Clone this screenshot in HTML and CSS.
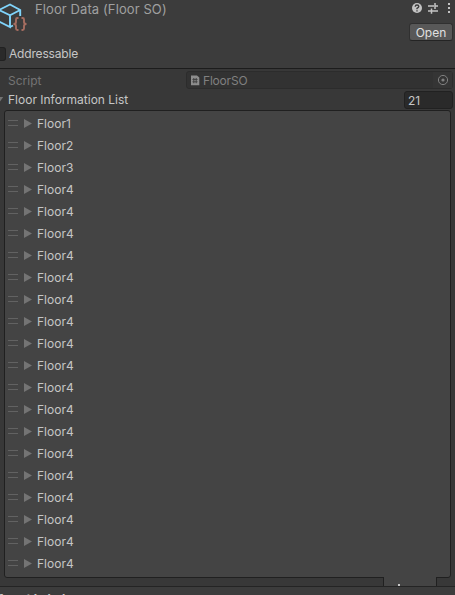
FILE: index.html
```
<!DOCTYPE html>
<html lang="en">
<head>
<meta charset="utf-8">
<title>Floor Data</title>
<link rel="stylesheet" href="styles.css">
</head>
<body>
<header class="header">
  <div class="title-row">
    <svg class="asset-icon" width="28" height="34" viewBox="0 0 28 34" fill="none">
      <path d="M-1 10 L10 4.5 L20.2 10 V16 M20.2 10 L10 15.3 L-1 10 V21.5 L10 27 V15.3 M10 27 L13 25.5" stroke="#80d4fb" stroke-width="1.9"/>
      <path d="M18.5 18 H17.5 Q16 18 16 19.5 V22 Q16 24 13.5 24 Q16 24 16 26 V28.5 Q16 30 17.5 30 H18.5 M21.5 18 H22.5 Q24 18 24 19.5 V22 Q24 24 26.5 24 Q24 24 24 26 V28.5 Q24 30 22.5 30 H21.5" stroke="#a56d60" stroke-width="1.9"/>
    </svg>
    <h1 class="title">Floor Data (Floor SO)</h1>
    <div class="actions">
      <div class="tools">
        <svg width="42" height="14" viewBox="0 0 42 14" fill="none">
          <circle cx="6" cy="7" r="5" fill="#c4c4c4"/>
          <path d="M4.2 5.8 Q4.3 4 6 4 Q7.8 4 7.8 5.5 Q7.8 6.5 6 7.4 V8.2 M6 9.2 V10.5" stroke="#3c3c3c" stroke-width="1.4"/>
          <path d="M17 5 H23 M24 5 H27 M24 2 V8 M17 10 H20 M21 10 H27 M20.5 7.5 V12.8" stroke="#c4c4c4" stroke-width="1.5"/>
          <path d="M37 2h2v2h-2z M37 6h2v2h-2z M37 10h2v2h-2z" fill="#c4c4c4"/>
        </svg>
      </div>
      <button class="open">Open</button>
    </div>
  </div>
  <label class="address"><span class="checkbox"></span>Addressable</label>
</header>
<main class="body">
  <div class="field script">
    <span class="label">Script</span>
    <div class="object">
      <svg width="10" height="11" viewBox="0 0 10 11"><path d="M1 0.5 H7 L9.3 2.5 V10.3 H1 Z" fill="#8d8d8d"/><path d="M3.8 3 V8.2 M6.2 3 V8.2 M2.5 4.5 H7.5 M2.5 6.7 H7.5" stroke="#444" stroke-width="1.1"/></svg>
      <span class="name">FloorSO</span>
      <span class="picker"><svg width="12" height="12" viewBox="0 0 12 12"><circle cx="6" cy="6" r="4.6" fill="none" stroke="#808080"/><circle cx="6" cy="6" r="1.6" fill="#808080"/></svg></span>
    </div>
  </div>
  <div class="field list-head">
    <svg class="fold" width="4" height="6" viewBox="0 0 4 6"><path d="M-5 0 H3.2 L-1 6 Z" fill="#737373"/></svg>
    <span class="label">Floor Information List</span>
    <span class="count">21</span>
  </div>
  <ul class="list">
    <li><i></i>Floor1</li><li><i></i>Floor2</li><li><i></i>Floor3</li>
    <li><i></i>Floor4</li><li><i></i>Floor4</li><li><i></i>Floor4</li>
    <li><i></i>Floor4</li><li><i></i>Floor4</li><li><i></i>Floor4</li>
    <li><i></i>Floor4</li><li><i></i>Floor4</li><li><i></i>Floor4</li>
    <li><i></i>Floor4</li><li><i></i>Floor4</li><li><i></i>Floor4</li>
    <li><i></i>Floor4</li><li><i></i>Floor4</li><li><i></i>Floor4</li>
    <li><i></i>Floor4</li><li><i></i>Floor4</li><li><i></i>Floor4</li>
  </ul>
  <div class="list-foot"><span class="plus"></span></div>
</main>
<footer class="labels">Asset Labels</footer>
</body>
</html>
```
FILE: styles.css
```
* { box-sizing: border-box; }
body {
  margin: 0;
  width: 455px;
  height: 595px;
  overflow: hidden;
  background: #383838;
  color: #c6c6c6;
  font: 12px/18px Inter, sans-serif;
}
.header { height: 69px; background: #3c3c3c; border-bottom: 1px solid #1c1c1c; }
.title-row { display: flex; height: 45px; }
.asset-icon { flex: none; }
.title { margin: 0 0 0 7px; font-size: 13px; font-weight: 400; line-height: 18px; letter-spacing: .1px; color: #a0a0a0; }
.actions { margin-left: auto; width: 46px; display: flex; flex-direction: column; align-items: flex-end; padding: 1px 2px 0 0; }
.tools { height: 22px; }
.tools svg { display: block; }
.open {
  flex: none; width: 44px; height: 18px; padding: 0;
  border: 1px solid #303030; border-bottom-color: #242424; border-radius: 3px;
  background: #585858; color: #e0e0e0; font: 12px/15px Inter, sans-serif;
}
.address { display: flex; align-items: center; height: 18px; gap: 3px; letter-spacing: -.17px; }
.checkbox { width: 6px; height: 14px; background: #2a2a2a; border: 1px solid #212121; border-left: 0; border-radius: 0 3px 3px 0; }
.body { height: 518px; border-bottom: 1px solid #242424; padding-top: 2px; }
.field { display: flex; align-items: center; padding-left: 8px; }
.script { height: 18px; color: #747474; }
.script .label { width: 178px; padding-top: 1px; }
.object { display: flex; align-items: center; width: 267px; height: 18px; padding-left: 3px; background: #323232; border: 1px solid #2c2c2c; border-radius: 3px; color: #808080; }
.object .name { margin-left: 3px; padding-top: 1px; letter-spacing: -.2px; }
.picker { display: flex; align-items: center; justify-content: center; width: 19px; height: 16px; margin-left: auto; background: #353535; }
.list-head { height: 21px; padding-left: 0; }
.fold { margin-right: 4px; }
.list-head .label { height: 18px; }
.count { width: 49px; height: 18px; margin: 1px 2px 0 auto; padding-left: 3px; background: #2a2a2a; border: 1px solid #212121; border-radius: 3px; line-height: 17px; }
.list { list-style: none; margin: 0 4px; width: 447px; height: 468px; padding: 2px 0 0 3px; background: #444; border: 1px solid #202020; border-radius: 3px; }
.list li { display: flex; align-items: center; height: 22px; }
.list li::before { content: ""; flex: none; width: 10px; height: 4px; margin: 0 6px 2px 0; border: solid #626262; border-width: 1px 0; }
.list i { flex: none; width: 8px; height: 9px; margin: 0 5px 1px 0; background: #747474; clip-path: polygon(0 0, 100% 50%, 0 100%); }
.list-foot { position: relative; width: 54px; height: 9px; margin: -1px 0 0 383px; background: #444; border: solid #202020; border-width: 0 1px; }
.plus { position: absolute; left: 14px; top: 7px; width: 2px; height: 2px; background: #c8c8c8; }
.labels { height: 8px; overflow: hidden; background: #3c3c3c; font-size: 12px; font-weight: 700; line-height: 18px; padding-top: 3px; text-indent: -3px; }
```
